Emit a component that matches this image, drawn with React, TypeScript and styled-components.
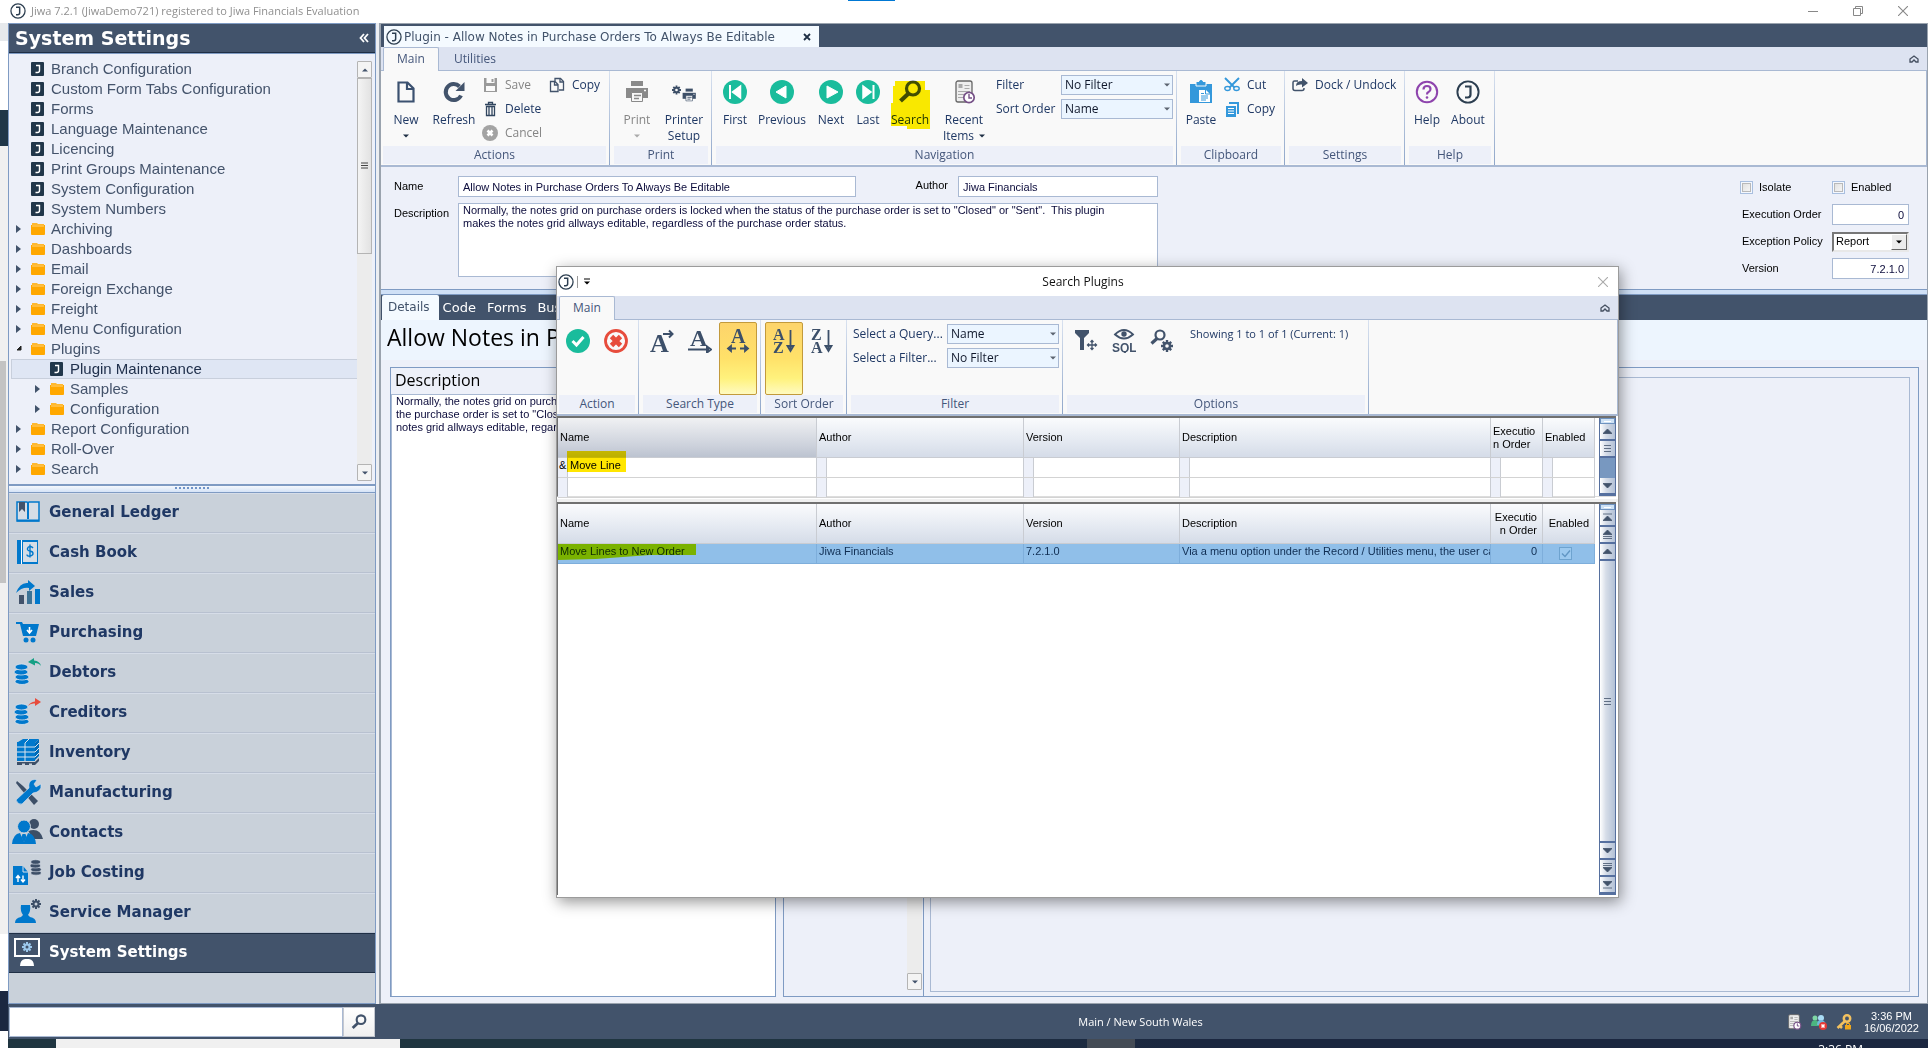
import React from 'react';
import styled, { createGlobalStyle, css } from 'styled-components';

const ui = '"Open Sans", "Noto Sans", sans-serif';
const classic = '"Liberation Sans", Arial, sans-serif';
const wide = '"DejaVu Sans", Verdana, sans-serif';

const slate = '#42536b';
const ink = '#1f3864';
const line = '#a9b9d3';
const edge = '#7f9bc3';
const pale = '#edf0f9';
const blue = '#0078cc';
const sky = '#3498db';
const teal = '#1abc9c';

const GlobalStyle = createGlobalStyle`
  *, *::before, *::after { box-sizing: border-box; }
  body { margin: 0; overflow: hidden; background: #fff; }
  button, input, select, textarea { font: inherit; color: inherit; margin: 0; border-radius: 0; }
  button { border: 0; padding: 0; background: none; cursor: pointer; }
  svg { display: block; flex: none; }
`;

/* ---------- icons ---------- */

type IconProps = { w?: number; h?: number; box?: string; children: React.ReactNode };
const Icon = ({ w = 24, h = w, box = `0 0 ${w} ${h}`, children }: IconProps) => (
  <svg width={w} height={h} viewBox={box} fill="none" aria-hidden="true">{children}</svg>
);

const Logo = ({ size = 16, color = '#2c3e50' }: { size?: number; color?: string }) => (
  <Icon w={size} box="0 0 24 24">
    <circle cx="12" cy="12" r="10.6" stroke={color} strokeWidth="1.9" />
    <path d="M9 6.5h5.5v8q0 3-3 3H9" stroke={color} strokeWidth="2.2" />
  </Icon>
);

const LeafIcon = () => (
  <Icon w={14}>
    <rect width="13" height="14" rx="1" fill="#20364a" />
    <path d="M5 3.5h3.500v5q0 2-2 2H4.500" stroke="#fff" strokeWidth="1.4" />
  </Icon>
);

const FolderIcon = () => (
  <Icon w={14}>
    <path d="M1 1h5l1 1h6v2H1z" fill="#ffb92e" />
    <path d="M0 3h14v9.500l-1 .5H1l-1-.5z" fill="#ffa800" />
    <path d="M1 4h12" stroke="#ffd27a" />
  </Icon>
);

const CaretRight = () => <Icon w={8}><path d="M1 0l5 4-5 4z" fill={slate} /></Icon>;
const CaretOpen = () => <Icon w={8}><path d="M6 1v4H2z" fill="#222" stroke="#222" /></Icon>;
const Down = ({ color = '#1f2f45' }: { color?: string }) => (
  <Icon w={6} h={4}><path d="M0 0.500h6l-3 3z" fill={color} /></Icon>
);
const Up = () => <Icon w={6} h={4}><path d="M0 3.500h6l-3-3z" fill={slate} /></Icon>;
const Cross = ({ color = '#888', size = 10 }: { color?: string; size?: number }) => (
  <Icon w={size} box="0 0 10 10"><path d="M0 0l10 10M10 0L0 10" stroke={color} strokeWidth="1.1" /></Icon>
);
const Collapse = () => (
  <Icon w={10} h={8}><path d="M1 7V4l4-3 4 3v3H7L5 5 3 7z" stroke="#444f60" strokeWidth="1.300" /></Icon>
);
const Grip = () => <Icon w={8} h={8}><path d="M0 1h7M0 3.500h7M0 6h7" stroke="#444" /></Icon>;

const NewDoc = () => (
  <Icon><path d="M4.500 2.500h9l6 6v13h-15zM13 2.500V9h6.500" stroke="#3b5170" strokeWidth="2.200" /></Icon>
);
const Refresh = () => (
  <Icon>
    <path d="M19 15.500a8 8 0 1 1-1.500-9" stroke={slate} strokeWidth="4" />
    <path d="M22.500 2v9h-9z" fill={slate} />
  </Icon>
);
const Save = () => (
  <Icon w={16}>
    <path d="M2 1h13v14H2z" fill="#9a9a9a" />
    <path d="M4.500 1h8v5h-8zM4 9h9v5H4z" fill="#fafafa" />
    <path d="M9.500 2h2v3h-2z" fill="#9a9a9a" />
  </Icon>
);
const Trash = () => (
  <Icon w={16}>
    <path d="M3 3.500h11M6.500 3V1.500h4V3M4.500 5.500v9h8v-9zM7 6v8M10 6v8" stroke="#31465f" strokeWidth="1.300" />
  </Icon>
);
const CancelIcon = () => (
  <Icon w={16}><circle cx="8" cy="8" r="8" fill="#a3a3a3" /><path d="M5.500 5.500l5 5m0-5l-5 5" stroke="#fff" strokeWidth="2.600" /></Icon>
);
const CopyDocs = () => (
  <Icon w={16}>
    <path d="M6 4V1.500h5.500l3 3V13H10" stroke={slate} strokeWidth="1.300" />
    <path d="M1.500 4.500h4.500l3 3v7H1.500zM5.500 4.500V8h3.500M11 1.500V5h3" stroke={slate} strokeWidth="1.300" />
  </Icon>
);
const PrinterShape = ({ color, ground = '#f9f9f9' }: { color: string; ground?: string }) => (
  <>
    <path d="M6 1h12v5H6z" fill={color} />
    <path d="M1 8h22v10H1z" fill={color} />
    <path d="M6.500 12.500h11v9h-11z" fill={ground} stroke={color} />
    <path d="M9 15.500h7M9 18.500h5" stroke={color} strokeWidth="1.500" />
    <path d="M19 10.500h2" stroke={ground} strokeWidth="1.500" />
  </>
);
const Printer = () => <Icon><PrinterShape color="#8a8a8a" /></Icon>;

const cogSpokes = 'M0-5V5M-5 0H5M-3.500-3.500L3.500 3.500M3.500-3.500L-3.500 3.500';
const Cog = ({ x, y, k = 1, color, hole }: { x: number; y: number; k?: number; color: string; hole: string }) => (
  <g transform={`translate(${x} ${y}) scale(${k})`}>
    <path d={cogSpokes} stroke={color} strokeWidth="2" />
    <circle r="3.500" fill={color} />
    <circle r="1.500" fill={hole} />
  </g>
);
const PrinterCog = () => (
  <Icon>
    <Cog x={4.5} y={10} k={0.9} color="#3d4f67" hole="#f9f9f9" />
    <g transform="translate(10 8) scale(.6)"><PrinterShape color="#3d4f67" /></g>
  </Icon>
);
const Disc = ({ children }: { children: React.ReactNode }) => (
  <Icon><circle cx="12" cy="12" r="12" fill={teal} />{children}</Icon>
);
const First = () => <Disc><path d="M17.500 6v12L9.500 12z" fill="#fff" stroke="#fff" strokeWidth="1.500" /><path d="M7 5v14" stroke="#fff" strokeWidth="2" /></Disc>;
const Previous = () => <Disc><path d="M16 6v12L6 12z" fill="#fff" stroke="#fff" /></Disc>;
const Next = () => <Disc><path d="M8 6v12l11-6z" fill="#fff" stroke="#fff" /></Disc>;
const Last = () => <Disc><path d="M7 6v12l8-6z" fill="#fff" stroke="#fff" strokeWidth="1.500" /><path d="M17.500 5v14" stroke="#fff" strokeWidth="2" /></Disc>;
const SearchIcon = ({ size = 24, color = slate }: { size?: number; color?: string }) => (
  <Icon w={size} box="0 0 24 24">
    <circle cx="15" cy="8.500" r="6.500" stroke={color} strokeWidth="3.200" />
    <path d="M10.500 13.500L2.500 21" stroke={color} strokeWidth="4.200" />
  </Icon>
);
const Recent = ({ size = 24 }: { size?: number }) => (
  <Icon w={size} box="0 0 24 24">
    <rect x="4" y="1" width="16" height="21" rx="2" fill="#eee" stroke="#666" strokeWidth="1.300" />
    <path d="M6.500 4h4v4h-4zM12.500 5h5v1h-5zM12.500 8h5v1h-5zM6 11h12v1H6zM6 14h7v1H6zM6 17h6v1H6z" fill="#aaa" />
    <circle cx="17" cy="17.500" r="5.200" fill="#fff" stroke="#765087" strokeWidth="1.700" />
    <path d="M17 14v4h3" stroke="#765087" strokeWidth="1.400" />
  </Icon>
);
const Paste = () => (
  <Icon>
    <path d="M1 4h22v19H1z" fill={sky} />
    <path d="M7 1.500h10V6H7z" fill={sky} stroke="#f9f9f9" />
    <circle cx="12" cy="2" r="1.500" fill={sky} stroke={sky} />
    <path d="M10 10h7l4 4v8H10z" fill="#fff" />
    <path d="M16.500 10v4H21M12 13.500h3M12 16h7M12 18h7M12 20h5" stroke={sky} />
  </Icon>
);
const Scissors = () => (
  <Icon w={16}>
    <path d="M1 1l9.500 9.500M15 1L5.500 10.500" stroke={sky} strokeWidth="1.900" />
    <ellipse cx="3.500" cy="11.500" rx="2.700" ry="2" stroke={sky} strokeWidth="1.400" />
    <ellipse cx="12.500" cy="11.500" rx="2.700" ry="2" stroke={sky} strokeWidth="1.400" />
  </Icon>
);
const CopyBlue = () => (
  <Icon w={16}>
    <path d="M5 1h10v12h-2V3H5z" fill={sky} />
    <path d="M2 5h10v11H2z" fill={sky} />
    <path d="M4 7.500h6M4 10h6M4 12.500h6" stroke="#fff" />
  </Icon>
);
const Dock = () => (
  <Icon w={16}>
    <path d="M6 4H2.500Q1 4 1 5.500v6Q1 13.500 3 13.500h7q2 0 2-2V11" stroke={slate} strokeWidth="1.500" />
    <path d="M4 9q0-5 6-5V1l6 5-6 4.500V7.500Q6 7 4 9z" fill={slate} />
  </Icon>
);
const Help = () => (
  <Icon>
    <circle cx="12" cy="12" r="10.200" stroke="#8e44ad" strokeWidth="2" />
    <path d="M8.500 9.500q0-3.500 3.500-3.500t3.500 3q0 2-2 3-1.500.7-1.500 2.500" stroke="#8e44ad" strokeWidth="2.200" />
    <circle cx="12" cy="17.500" r="1.300" fill="#8e44ad" />
  </Icon>
);
const Tick = () => <Disc><path d="M6.500 12l4 4 7-8" stroke="#fff" strokeWidth="3" /></Disc>;
const Stop = () => (
  <Icon>
    <circle cx="12" cy="12" r="10.500" stroke="#e74c3c" strokeWidth="2.800" />
    <path d="M7.500 7.500l9 9m0-9l-9 9" stroke="#e74c3c" strokeWidth="4.800" />
  </Icon>
);
const serifText = { fontFamily: '"Liberation Serif", serif', fontWeight: 700, fill: '#3c4f69' };
const StartsWith = () => (
  <Icon>
    <text x="0" y="23" fontSize="26" {...serifText}>A</text>
    <path d="M13 5h9M19 1.500L22.500 5 19 8.500" stroke="#3c4f69" strokeWidth="2" />
  </Icon>
);
const Underlined = () => (
  <Icon>
    <text x="2" y="17" fontSize="24" {...serifText}>A</text>
    <path d="M0 20.500h21M19 17.500l4 3-4 3z" stroke="#3c4f69" strokeWidth="2" />
  </Icon>
);
const Contains = () => (
  <Icon>
    <text x="5" y="14" fontSize="20" {...serifText}>A</text>
    <path d="M3 19.500h7M14 19.500h7M5 17l-3 2.500L5 22zM19 17l3 2.500-3 2.500z" stroke="#3c4f69" strokeWidth="1.800" />
  </Icon>
);
const Sort = ({ a, b }: { a: string; b: string }) => (
  <Icon>
    <text x="1" y="11" fontSize="16" {...serifText}>{a}</text>
    <text x="1" y="24" fontSize="16" {...serifText}>{b}</text>
    <path d="M18.500 1v19M15.500 17l3 5 3-5z" stroke="#3c4f69" strokeWidth="1.800" />
  </Icon>
);
const Funnel = () => (
  <Icon>
    <path d="M1 1h14v3l-5 5v12H6V9L1 4z" fill={slate} />
    <path d="M18 11.500v9M13.500 16h9M16.500 13l1.500-1.500 1.500 1.500M16.500 19l1.500 1.500 1.500-1.500M15 14.500L13.500 16l1.500 1.500M21 14.500l1.500 1.500-1.500 1.500" stroke={slate} strokeWidth="1.300" />
  </Icon>
);
const EyeSql = () => (
  <Icon>
    <path d="M3 5.500q9-9 18 0-9 8-18 0z" stroke={slate} strokeWidth="1.800" />
    <circle cx="12" cy="5" r="2.700" fill={slate} />
    <text x="0" y="22.500" fontSize="12" fontFamily={classic} fontWeight="700" fill={slate}>SQL</text>
  </Icon>
);
const SearchCog = () => (
  <Icon>
    <circle cx="10" cy="6" r="4.500" stroke={slate} strokeWidth="2.200" />
    <path d="M7 9.500l-5.500 5" stroke={slate} strokeWidth="3.200" />
    <Cog x={17} y={17} k={1.2} color={slate} hole="#f9f9f9" />
  </Icon>
);

const Coins = ({ x = 0, y = 0, k = 1, color = blue }: { x?: number; y?: number; k?: number; color?: string }) => (
  <g transform={`translate(${x} ${y}) scale(${k})`} fill={color} stroke="#dbe3ec" strokeWidth=".8">
    <ellipse cx="8" cy="18.500" rx="7" ry="3" />
    <ellipse cx="8" cy="14" rx="7" ry="3" />
    <ellipse cx="7" cy="9" rx="7" ry="3" />
    <ellipse cx="7.500" cy="4" rx="6.500" ry="3" />
  </g>
);
const NavIcon = ({ children }: { children: React.ReactNode }) => <Icon w={32} h={28}>{children}</Icon>;

const navIcons: Record<string, React.ReactNode> = {
  'General Ledger': (
    <NavIcon>
      <path d="M5 4h10l1 1 1-1h10v19H5z" stroke={blue} strokeWidth="1.500" fill="#d5dde6" />
      <path d="M16 5v16M5 22.500h22" stroke={blue} strokeWidth="2" />
      <path d="M7 4h6v10l-3-3-3 3z" fill={slate} />
    </NavIcon>
  ),
  'Cash Book': (
    <NavIcon>
      <path d="M5 2h21v24H5z" fill={blue} />
      <path d="M11 4h14v20H11z" fill="#d5dde6" />
      <path d="M9.500 2v24" stroke="#fff" />
      <path d="M21 10q-1-1.500-3-1.500T15.500 10.500t2.500 2.500 3 2.500-3 2.500-3-1.500M18 6.500v13" stroke={blue} strokeWidth="1.400" />
    </NavIcon>
  ),
  Sales: (
    <NavIcon>
      <path d="M7 17h5v9H7z" fill={slate} /><path d="M15 13h5v13h-5z" fill="#3d7396" /><path d="M23 11h5v15h-5z" fill={blue} />
      <path d="M4 15Q8 4 16 5V2l7 6-6 5v-3Q10 9 4 15z" fill={blue} />
    </NavIcon>
  ),
  Purchasing: (
    <NavIcon>
      <path d="M4 4h6l1 2h16l-3 12H11L8 6H4z" fill={blue} />
      <path d="M17.500 9v5M15 12l2.500 3 2.500-3" stroke="#fff" strokeWidth="1.600" />
      <circle cx="14" cy="22" r="2.500" fill={blue} /><circle cx="21" cy="22" r="2.500" fill={blue} />
    </NavIcon>
  ),
  Debtors: (
    <NavIcon>
      <Coins x={2} y={5} />
      <path d="M29 8q-2-3-6-3V7.500L16 4l6-4v2.500Q28 3 29 8z" fill="#16a085" />
    </NavIcon>
  ),
  Creditors: (
    <NavIcon>
      <Coins x={2} y={5} />
      <path d="M16 8q2-4 7-4.500V0l6 4-6 4V5.500Q18 5 16 8z" fill="#e74c3c" />
    </NavIcon>
  ),
  Inventory: (
    <NavIcon>
      <path d="M6 4l5-3h16l-4 4v18H5V4z" fill={blue} /><path d="M23 5l4-4v17l-4 4z" fill="#006bb8" />
      <path d="M5 9h18l4-4M5 14h18l4-4M5 19h18l4-4M13 5l4-4M13 5v18" stroke="#dbe3ec" />
      <path d="M5 24h18l4-4v3l-4 4h-3v-1.500h-3V27h-4v-1.500h-3V27H5z" fill="#3d4f67" />
    </NavIcon>
  ),
  Manufacturing: (
    <NavIcon>
      <path d="M5 3l6 5 15 15-4 4L8 10 4 5z" fill="#3d4f67" />
      <path d="M4 22L17 10q-1-6 3-8 3-1 5 0l-3 4 2 3 5-3q1 8-8 9L10 26q-4 1-6-4z" fill={blue} stroke="#dbe3ec" strokeWidth=".6" />
    </NavIcon>
  ),
  Contacts: (
    <NavIcon>
      <circle cx="22" cy="6" r="5" fill="#3d4f67" /><path d="M16 13q12-4 15 8h-9z" fill="#3d4f67" />
      <circle cx="12" cy="8.500" r="6.500" fill={blue} stroke="#c9d1da" />
      <path d="M0 26q1-10 8-11l4 9 4-9q7 1 8 11z" fill={blue} /><path d="M10.500 16h3l1 3-2.500 6-2.500-6z" fill={blue} />
    </NavIcon>
  ),
  'Job Costing': (
    <NavIcon>
      <Coins x={18} y={1} k={0.75} color="#3d4f67" />
      <path d="M1 8h10l5 6v13H1z" fill={blue} /><path d="M11 8v6h5" stroke="#dbe3ec" />
      <path d="M6 24v-6M4 20l2-2.500L8 20M11 17.500v6M9 21.500l2 2.500 2-2.500" stroke="#fff" strokeWidth="1.400" />
    </NavIcon>
  ),
  'Service Manager': (
    <NavIcon>
      <path d="M3 25q0-5 6-6l2-2q-3-4-2-10h9q1 6-2 10l2 2q6 1 6 6z" fill={blue} />
      <Cog x={24} y={6} color="#3d4f67" hole="#c9d1da" />
    </NavIcon>
  ),
  'System Settings': (
    <NavIcon>
      <path d="M3 1h24v17H3z" fill={slate} stroke="#fff" strokeWidth="2" />
      <Cog x={15} y={9} color="#9cc8ec" hole={slate} />
      <path d="M8 28q0-6 5-7h4q5 1 5 7z" fill="#fff" />
    </NavIcon>
  ),
};

/* ---------- shell ---------- */

const Desktop = styled.div`
  display: grid;
  grid-template: 23px minmax(0, 1fr) 9px / 8px minmax(0, 1fr);
  height: 100vh;
  font: 12px/16px ${ui};
  color: ${ink};
`;
const TitleBar = styled.header`
  grid-column: 1 / -1;
  display: flex;
  align-items: center;
  padding: 0 20px 2px 10px;
  gap: 5px;
  font-size: 11px;
  color: #8f8f8f;
  background: linear-gradient(#0078d4, #0078d4) 848px 0 / 47px 1px no-repeat #fff;
`;
const TitleText = styled.span`flex: 1;`;
const WindowButtons = styled.div`
  display: flex;
  gap: 35px;
  align-items: center;
`;
const Backdrop = styled.div`
  display: flex;
  flex-direction: column;
  background: #f0f0f0;
  overflow: hidden;
`;
const Strip = styled.div<{ $h?: number; $w?: number; $c: string }>`
  height: ${p => (p.$h ? `${p.$h}px` : 'auto')};
  flex: ${p => (p.$h ? 'none' : 1)};
  width: ${p => p.$w ?? 8}px;
  background: ${p => p.$c};
`;
const Taskbar = styled.footer`
  grid-column: 1 / -1;
  display: flex;
  justify-content: flex-end;
  padding: 3px 65px 0 0;
  color: #fff;
  overflow: hidden;
  background:
    linear-gradient(#444b55, #444b55) 1087px 0 / 48px 9px no-repeat,
    linear-gradient(90deg, #fff 8px, #1f3540 8px 56px, #f0f0f0 56px 400px, #1f3540 400px 700px, #1b2740 1200px, #1b2740);
`;
const Shell = styled.div`
  display: grid;
  grid-template: minmax(0, 1fr) 35px / 368px minmax(0, 1fr);
  column-gap: 3px;
  background: ${slate};
  min-height: 0;
`;
const Sidebar = styled.aside`
  display: flex;
  flex-direction: column;
  border: 1px solid ${edge};
  background: ${pale};
  min-height: 0;
  box-shadow: 3px 0 0 #eceef2;
`;
const SideHeader = styled.div`
  display: flex;
  align-items: center;
  justify-content: space-between;
  height: 29px;
  flex: none;
  padding: 0 6px 0 6px;
  background: ${slate};
  border-bottom: 1px solid #1f2f45;
  color: #fff;
  font: bold 19px/24px ${wide};
`;
const TreeArea = styled.div`
  flex: 1;
  display: flex;
  min-height: 0;
  border-top: 1px solid ${edge};
  border-bottom: 2px solid ${edge};
`;
const Tree = styled.ul`
  flex: 1;
  list-style: none;
  margin: 0;
  padding: 5px 0 0 2px;
  overflow: hidden;
  font: 15px/18px ${classic};
  color: #44536b;
`;
const TreeRow = styled.li<{ $level: number; $on?: boolean }>`
  display: flex;
  align-items: center;
  height: 18px;
  margin: 1px 0 2px;
  padding-left: ${p => 4 + p.$level * 19}px;
  ${p => p.$on && css`
    background: #dfe6f4;
    color: #20304c;
    box-shadow: inset 1px 0 0 #c8cfdc, 0 -1px 0 #c8cfdc, 0 1px 0 #c8cfdc;
  `}
`;
const TreeCaret = styled.span`width: 16px;`;
const TreeIcon = styled.span`width: 20px;`;
const ScrollTrack = styled.div`
  display: flex;
  flex-direction: column;
  width: 15px;
  margin: 7px 3px 3px 0;
  background: #ececec;
`;
const ScrollButton = styled.button`
  display: grid;
  place-items: center;
  height: 17px;
  border: 1px solid #b4b4b4;
  border-radius: 1px;
  background: #f4f4f4;
`;
const ScrollThumb = styled.div`
  display: grid;
  place-items: center;
  height: 176px;
  border: 1px solid #b4b4b4;
  background: linear-gradient(90deg, #f4f4f4, #e2e2e2);
`;
const ScrollSpace = styled.div`flex: 1;`;
const Splitter = styled.div`
  height: 6px;
  flex: none;
  display: grid;
  justify-items: center;
  padding-top: 1px;
  background: linear-gradient(#f5f8fd, #d5e3f7);
`;
const SplitDots = styled.span`
  width: 35px;
  height: 2px;
  background: repeating-linear-gradient(90deg, #6f93c8 0 2px, transparent 2px 4px);
`;
const ModuleNav = styled.nav`
  flex: none;
  padding-bottom: 30px;
  border-top: 1px solid ${edge};
  background: #c9d1da;
`;
const ModuleButton = styled.button<{ $on?: boolean }>`
  display: flex;
  align-items: center;
  gap: 5px;
  width: 100%;
  height: 40px;
  padding: 0 0 2px 3px;
  text-align: left;
  font: bold 15px/20px ${wide};
  color: ${p => (p.$on ? '#fff' : ink)};
  background: ${p => (p.$on ? slate : '#c9d1da')};
  border-bottom: 1px solid ${p => (p.$on ? '#1f2f45' : '#b8c1d0')};
  border-top: 1px solid ${p => (p.$on ? '#1f2f45' : '#d6dde8')};
`;

const QuickSearch = styled.form`
  display: flex;
  padding: 3px 1px 2px;
`;
const QuickInput = styled.input`
  flex: 1;
  min-width: 0;
  border: 1px solid ${line};
  background: #fff;
`;
const QuickButton = styled.button`
  display: grid;
  place-items: center;
  width: 32px;
  border: 1px solid #c4c8d0;
  background: linear-gradient(#fff, #f0f0f0);
`;
const StatusBar = styled.div`
  display: grid;
  align-items: center;
  color: #fff;
  font: 11px/12px ${classic};
`;
const StatusText = styled.span`
  grid-area: 1 / 1;
  justify-self: center;
  padding-right: 26px;
  font: 11px/16px ${ui};
`;
const Tray = styled.div`
  grid-area: 1 / 1;
  justify-self: end;
  display: flex;
  align-items: center;
  gap: 9px;
  padding-right: 9px;
`;
const Clock = styled.time`
  padding-left: 3px;
  text-align: center;
  font: 11px/12px ${classic};
`;

/* ---------- document ---------- */

const Document = styled.main`
  display: flex;
  flex-direction: column;
  min-height: 0;
  border: 1px solid #9aa3ae;
  border-width: 1px 1px 1px 2px;
  background: ${pale};
`;
const DocTabs = styled.div`
  display: flex;
  height: 23px;
  flex: none;
  padding: 2px 0 0 3px;
  background: ${slate};
`;
const DocTab = styled.div`
  display: flex;
  align-items: center;
  gap: 2px;
  padding: 0 8px 0 2px;
  background: #f4faff;
  color: ${slate};
  font: 12px/20px ${wide};
`;
const TabClose = styled.button`margin-left: 26px;`;

const RibbonTabs = styled.div`
  display: flex;
  height: 23px;
  flex: none;
  padding: 0 8px 0 2px;
  background: #dde3f1;
  color: #44567a;
`;
const RibbonTab = styled.button<{ $on?: boolean }>`
  width: ${p => (p.$on ? 56 : 72)}px;
  height: 24px;
  padding-bottom: 1px;
  ${p => p.$on && css`
    background: #f9f9f9;
    border: 1px solid ${line};
    border-bottom: 0;
    border-radius: 2px 2px 0 0;
    position: relative;
  `}
`;
const CollapseButton = styled.button`
  margin-left: auto;
`;
const RibbonBar = styled.div`
  display: flex;
  flex: none;
  height: 97px;
  border: 1px solid ${line};
  border-width: 1px 1px 2px 0;
  background: #f9f9f9;
`;
const Group = styled.section<{ $w: number; $first?: boolean }>`
  display: flex;
  flex-direction: column;
  width: ${p => p.$w}px;
  flex: none;
  padding: 0 3px 1px ${p => (p.$first ? 2 : 4)}px;
  border-right: 1px solid;
  border-image: linear-gradient(#d9e2f0, #8fa6c9) 1;
`;
const GroupBody = styled.div`
  display: flex;
  height: 75px;
`;
const GroupTitle = styled.div`
  height: 18px;
  text-align: center;
  line-height: 18px;
  background: ${pale};
  color: #44567a;
`;
const BigButton = styled.button<{ $w: number; $on?: boolean; $off?: boolean }>`
  display: flex;
  flex-direction: column;
  align-items: center;
  width: ${p => p.$w}px;
  padding-top: 9px;
  gap: 8px;
  flex: none;
  color: ${p => (p.$off ? '#858585' : ink)};
  ${p => p.$on && css`
    height: 73px;
    margin-top: 2px;
    padding-top: 6px;
    border: 1px solid #c29a3c;
    border-radius: 2px;
    background: linear-gradient(#fdd46b, #ffe169 50%, #fff27d 78%, #fffac0);
  `}
`;
const BigLabel = styled.span`
  display: flex;
  flex-direction: column;
  align-items: center;
  line-height: 16px;
  white-space: nowrap;
`;
const CaretLine = styled.span`
  display: flex;
  align-items: center;
  justify-content: center;
  gap: 5px;
  min-height: 15px;
`;
const SmallColumn = styled.div<{ $w?: number }>`
  display: flex;
  flex-direction: column;
  padding-top: 2px;
  width: ${p => (p.$w ? `${p.$w}px` : 'auto')};
`;
const SmallButton = styled.button<{ $off?: boolean }>`
  display: flex;
  align-items: center;
  gap: 7px;
  height: 24px;
  padding-left: 3px;
  white-space: nowrap;
  color: ${p => (p.$off ? '#858585' : ink)};
`;
const PickGrid = styled.div<{ $label: number }>`
  display: grid;
  grid-template-columns: ${p => p.$label}px 112px;
  grid-auto-rows: 20px;
  gap: 4px 0;
  align-items: center;
  align-content: start;
  padding-top: 4px;
  white-space: nowrap;
`;
const PickGridNav = styled(PickGrid)`margin-left: 4px;`;
const PickGridDialog = styled(PickGrid)`padding-left: 2px;`;
const PickBox = styled.span`
  display: grid;
  align-items: center;
  & > * { grid-area: 1 / 1; }
  & > svg { justify-self: end; margin-right: 3px; pointer-events: none; }
`;
const Pick = styled.select`
  appearance: none;
  width: 100%;
  height: 20px;
  padding: 0 3px;
  border: 1px solid ${line};
  background: #ebf5ff;
  color: #10182c;
  line-height: 16px;
`;
const MarkerHost = styled.span`
  position: relative;
  display: flex;
`;
const Marker = styled.svg<{ $x: number; $y: number }>`
  position: absolute;
  left: ${p => p.$x}px;
  top: ${p => p.$y}px;
  mix-blend-mode: multiply;
  pointer-events: none;
`;

const FormArea = styled.div`
  display: flex;
  justify-content: space-between;
  flex: none;
  height: 122px;
  padding: 9px 18px 0 13px;
  font: 11px/13px ${classic};
  color: #000;
`;
const FieldGrid = styled.div`
  display: grid;
  grid-template: 21px 74px / 64px 398px 102px 200px;
  row-gap: 6px;
`;
const FieldLabel = styled.label<{ $end?: boolean }>`
  padding: ${p => (p.$end ? '3px 10px 0 0' : '4px 0 0')};
  text-align: ${p => (p.$end ? 'right' : 'left')};
`;
const Field = styled.input<{ $end?: boolean }>`
  min-width: 0;
  width: 100%;
  height: 21px;
  padding: 0 4px;
  border: 1px solid ${line};
  background: #fff;
  color: #0b0b3b;
  text-align: ${p => (p.$end ? 'right' : 'left')};
`;
const Memo = styled.textarea`
  display: block;
  resize: none;
  outline: 0;
  padding: 0 24px 0 4px;
  border: 1px solid ${line};
  background: #fff;
  color: #0b0b3b;
  overflow: hidden;
`;
const FormMemo = styled(Memo)`grid-column: 2 / -1;`;
const OptionGrid = styled.div`
  display: grid;
  grid-template-columns: 92px 77px;
  grid-auto-rows: 21px;
  row-gap: 6px;
  padding-top: 1px;
  align-items: center;
`;
const CheckLabel = styled.label`
  display: flex;
  align-items: center;
  gap: 6px;
`;
const Check = styled.input`
  appearance: none;
  width: 13px;
  height: 13px;
  border: 1px solid #a9bfdf;
  background: linear-gradient(135deg, #dcdcdc, #fbfbfb);
  box-shadow: inset 0 0 0 1px #f4f8ff, inset 0 0 0 2px #b9b9b9;
`;
const OptionLabel = styled.label`padding-left: 2px; white-space: nowrap;`;
const PolicySelect = styled.select`
  appearance: none;
  width: 100%;
  height: 20px;
  padding: 0 2px;
  border: 2px solid;
  border-color: #777 #e8e8e8 #e8e8e8 #777;
  background: #fff;
`;
const PolicyArrow = styled.span`
  justify-self: end;
  display: grid;
  place-items: center;
  width: 16px;
  height: 16px;
  margin-right: 2px;
  background: #ececec;
  border: 1px solid;
  border-color: #fff #666 #666 #fff;
  pointer-events: none;
`;
const Divider = styled.div`
  height: 6px;
  flex: none;
  border: 1px solid ${edge};
  border-width: 1px 0;
  background: #cfe0f6;
`;
const PageTabs = styled.div`
  display: flex;
  height: 25px;
  flex: none;
  padding-left: 1px;
  background: ${slate};
  color: #fff;
  font: 13px/24px ${wide};
`;
const PageTab = styled.button<{ $on?: boolean }>`
  padding: ${p => (p.$on ? '0 9px 4px 6px' : '0 7px 0 4px')};
  ${p => p.$on && css`
    background: #f4faff;
    color: ${slate};
    font-size: 12px;
    border-radius: 2px 2px 0 0;
  `}
`;
const Heading = styled.h1`
  margin: 0;
  flex: none;
  height: 40px;
  padding: 0 6px;
  background: #edf5fe;
  color: #000;
  font: 23px/34px ${ui};
`;
const Panels = styled.div`
  flex: 1;
  display: grid;
  grid-template-columns: 386px minmax(0, 1fr);
  column-gap: 7px;
  min-height: 0;
  padding: 7px 8px 6px 9px;
`;
const Panel = styled.section`
  display: flex;
  flex-direction: column;
  border: 1px solid ${edge};
  min-height: 0;
`;
const PanelTitle = styled.h2`
  margin: 0;
  height: 27px;
  flex: none;
  padding-left: 4px;
  font: 16px/24px ${ui};
  color: #000;
  border-bottom: 1px solid ${line};
`;
const PanelMemo = styled(Memo)`
  flex: 1;
  border-width: 0 0 0 1px;
  padding-right: 18px;
  font: 11px/13px ${classic};
`;
const SplitPanel = styled.section`
  display: grid;
  grid-template-columns: 140px minmax(0, 1fr);
  column-gap: 6px;
  padding-right: 8px;
  border: 1px solid ${edge};
  min-height: 0;
`;
const Picker = styled.div`
  display: flex;
  justify-content: flex-end;
  border-right: 1px solid ${edge};
`;
const PickerTrack = styled(ScrollTrack)`margin: 7px 1px 6px 0;`;
const InnerFrame = styled.div`
  margin: 9px 0 4px;
  border: 1px solid ${line};
`;

/* ---------- search window ---------- */

const Dialog = styled.div`
  position: absolute;
  left: 556px;
  top: 266px;
  width: 1063px;
  height: 632px;
  display: flex;
  flex-direction: column;
  border: 1px solid #9b9b9b;
  background: #fff;
  color: ${ink};
  font: 12px/16px ${ui};
  box-shadow: 2px 4px 14px rgba(0, 0, 0, .42);
`;
const DialogTitle = styled.div`
  display: grid;
  grid-template-columns: 40px 1fr 40px;
  align-items: center;
  height: 29px;
  flex: none;
  padding: 0 10px 0 1px;
  color: #111;
  text-align: center;
`;
const QuickAccess = styled.span`
  display: flex;
  align-items: center;
  gap: 3px;
`;
const Bar = styled.span`
  width: 1px;
  height: 12px;
  margin-right: 3px;
  background: #999;
`;
const DialogClose = styled.button`justify-self: end;`;
const Showing = styled.output`
  padding: 6px 0 0 9px;
  font-size: 11px;
  white-space: nowrap;
`;
const GridFrame = styled.div<{ $fill?: boolean }>`
  display: flex;
  justify-content: space-between;
  align-items: stretch;
  ${p => (p.$fill ? 'flex: 1; min-height: 0;' : 'height: 81px; flex: none; border-bottom: 1px solid #ddd;')}
  margin: 0 2px 2px 0;
  border-top: 2px solid #707070;
  border-left: 1px solid #707070;
  font: 11px/13px ${classic};
  color: #000;
`;
const GridGap = styled.div`
  height: 3px;
  flex: none;
  background: #f0f0f0;
`;
const Table = styled.table`
  width: 1037px;
  height: max-content;
  table-layout: fixed;
  border-collapse: separate;
  border-spacing: 0;
`;
const HeadCell = styled.th<{ $on?: boolean; $end?: boolean }>`
  height: 40px;
  padding: 0 5px 0 2px;
  border-right: 1px solid #c9ccd2;
  border-bottom: 1px solid #c9ccd2;
  font-weight: 400;
  text-align: ${p => (p.$end ? 'right' : 'left')};
  word-break: break-all;
  background: ${p => (p.$on
    ? 'linear-gradient(#f0f1f3, #cdd2dc 70%, #bcc3d0)'
    : 'linear-gradient(#fafbfd, #e4e9f1 60%, #d5dce8)')};
`;
const FilterCell = styled.td`
  height: 20px;
  padding: 0;
  border-right: 1px solid #c9ccd2;
  border-bottom: 1px solid #d3d3d3;
`;
const FilterBox = styled.span`
  display: flex;
  height: 19px;
  line-height: 14px;
  position: relative;
`;
const Operator = styled.span`
  width: 10px;
  padding-left: 1px;
  border-right: 1px solid #c9ccd2;
  background: ${pale};
`;
const FilterInput = styled.input`
  flex: 1;
  min-width: 0;
  border: 0;
  padding: 0 2px 5px;
  background: none;
`;
const ResultCell = styled.td<{ $end?: boolean }>`
  height: 20px;
  padding: 0 ${p => (p.$end ? 5 : 0)}px 5px 2px;
  border-right: 1px solid #7eaedb;
  border-bottom: 1px solid #7eaedb;
  background: #90bfe9;
  color: #0f2d52;
  overflow: hidden;
  white-space: nowrap;
  text-align: ${p => (p.$end ? 'right' : 'left')};
`;
const CheckCell = styled(ResultCell)`padding: 0 0 0 16px;`;
const CheckStack = styled.span`
  display: grid;
  justify-items: start;
  & > * { grid-area: 1 / 1; }
  & > svg { pointer-events: none; }
`;
const RowCheck = styled.input`
  appearance: none;
  width: 13px;
  height: 13px;
  border: 1px solid #6ea3cf;
  background: #9cc9ef;
`;
const Marked = styled.span`
  position: relative;
`;
const Bars = styled.div`
  display: flex;
  flex-direction: column;
  width: 17px;
  background: #7898c0;
  border: 1px solid #56709f;
  border-top: 0;
`;
const BarHandle = styled.div`
  height: 6px;
  flex: none;
  border: 1px solid #6f93bf;
  background: linear-gradient(#fff, #fff) center / 7px 1px no-repeat #cfe2f5;
`;
const BarButton = styled.button<{ $grow?: boolean }>`
  display: grid;
  place-items: center;
  height: 17px;
  flex: ${p => (p.$grow ? '1 1 auto' : 'none')};
  border-bottom: 2px solid #56709f;
  background: linear-gradient(90deg, #fff, #d6dde8 40%, #b3c1d6);
`;
const Arrow = ({ d }: { d: string }) => (
  <Icon w={9} h={9}><path d={d} fill={slate} stroke={slate} strokeWidth=".8" /></Icon>
);
const arrows = {
  up: 'M0 6.500h9L4.500 2z',
  down: 'M0 2.500h9L4.500 7z',
  top: 'M0 1h9M0 7.500h9L4.500 3z',
  pageUp: 'M0 4.500h9L4.500 0zM0 6.500h9M0 8.500h9',
  pageDown: 'M0 .5h9M0 2.500h9M0 4.500h9L4.500 9z',
  bottom: 'M0 1.500h9L4.500 6zM0 8h9',
  grip: 'M1 1.500h7M1 4.500h7M1 7.500h7',
};

/* ---------- data ---------- */

type Node = { label: string; level?: number; kind: 'leaf' | 'folder' | 'open'; on?: boolean };
const tree: Node[] = [
  ...['Branch Configuration', 'Custom Form Tabs Configuration', 'Forms', 'Language Maintenance', 'Licencing',
    'Print Groups Maintenance', 'System Configuration', 'System Numbers'].map(label => ({ label, kind: 'leaf' as const })),
  ...['Archiving', 'Dashboards', 'Email', 'Foreign Exchange', 'Freight', 'Menu Configuration'].map(label => ({ label, kind: 'folder' as const })),
  { label: 'Plugins', kind: 'open' },
  { label: 'Plugin Maintenance', kind: 'leaf', level: 1, on: true },
  { label: 'Samples', kind: 'folder', level: 1 },
  { label: 'Configuration', kind: 'folder', level: 1 },
  { label: 'Report Configuration', kind: 'folder' },
  { label: 'Roll-Over', kind: 'folder' },
  { label: 'Search', kind: 'folder' },
];

const columns = [
  { label: 'Name', width: 259 },
  { label: 'Author', width: 207 },
  { label: 'Version', width: 156 },
  { label: 'Description', width: 311 },
  { label: 'Execution Order', width: 52 },
  { label: 'Enabled', width: 52 },
];

const note = 'Normally, the notes grid on purchase orders is locked when the status of the purchase order is set to "Closed" or "Sent".  This plugin makes the notes grid allways editable, regardless of the purchase order status.';

const Columns = () => <colgroup>{columns.map(c => <col key={c.label} style={{ width: c.width }} />)}</colgroup>;

const PickField = ({ id, value }: { id: string; value: string }) => (
  <PickBox>
    <Pick id={id} defaultValue={value}><option>{value}</option></Pick>
    <Down color="#5c6470" />
  </PickBox>
);

type BigProps = { icon: React.ReactNode; w: number; label?: string; second?: string; caret?: boolean; off?: boolean };
const Big = ({ icon, w, label, second, caret, off }: BigProps) => (
  <BigButton $w={w} $off={off} disabled={off}>
    {icon}
    <BigLabel>
      {label}
      {(second || caret) && <CaretLine>{second}{caret && <Down color={off ? '#aaa' : undefined} />}</CaretLine>}
    </BigLabel>
  </BigButton>
);

const MainRibbon = () => (
  <RibbonBar>
    <Group $w={229} $first>
      <GroupBody>
        <Big icon={<NewDoc />} w={46} label="New" caret />
        <Big icon={<Refresh />} w={50} label="Refresh" />
        <SmallColumn $w={67}>
          <SmallButton $off><Save />Save</SmallButton>
          <SmallButton><Trash />Delete</SmallButton>
          <SmallButton $off><CancelIcon />Cancel</SmallButton>
        </SmallColumn>
        <SmallColumn><SmallButton><CopyDocs />Copy</SmallButton></SmallColumn>
      </GroupBody>
      <GroupTitle>Actions</GroupTitle>
    </Group>
    <Group $w={102}>
      <GroupBody>
        <Big icon={<Printer />} w={46} label="Print" caret off />
        <Big icon={<PrinterCog />} w={48} label="Printer" second="Setup" />
      </GroupBody>
      <GroupTitle>Print</GroupTitle>
    </Group>
    <Group $w={465}>
      <GroupBody>
        <Big icon={<First />} w={38} label="First" />
        <Big icon={<Previous />} w={56} label="Previous" />
        <Big icon={<Next />} w={42} label="Next" />
        <Big icon={<Last />} w={32} label="Last" />
        <MarkerHost>
          <Big icon={<SearchIcon />} w={52} label="Search" />
          <Marker $x={7} $y={10} width="39" height="48"><path d="M4 0h30v9h5v39H16v-3H0V22h2V5h2z" fill="#ffee00" /></Marker>
        </MarkerHost>
        <Big icon={<Recent />} w={56} label="Recent" second="Items" caret />
        <PickGridNav $label={65}>
          <label htmlFor="nav-filter">Filter</label>
          <PickField id="nav-filter" value="No Filter" />
          <label htmlFor="nav-sort">Sort Order</label>
          <PickField id="nav-sort" value="Name" />
        </PickGridNav>
      </GroupBody>
      <GroupTitle>Navigation</GroupTitle>
    </Group>
    <Group $w={108}>
      <GroupBody>
        <Big icon={<Paste />} w={40} label="Paste" />
        <SmallColumn>
          <SmallButton><Scissors />Cut</SmallButton>
          <SmallButton><CopyBlue />Copy</SmallButton>
        </SmallColumn>
      </GroupBody>
      <GroupTitle>Clipboard</GroupTitle>
    </Group>
    <Group $w={120}>
      <GroupBody>
        <SmallColumn><SmallButton><Dock />Dock / Undock</SmallButton></SmallColumn>
      </GroupBody>
      <GroupTitle>Settings</GroupTitle>
    </Group>
    <Group $w={90}>
      <GroupBody>
        <Big icon={<Help />} w={36} label="Help" />
        <Big icon={<Logo size={24} />} w={46} label="About" />
      </GroupBody>
      <GroupTitle>Help</GroupTitle>
    </Group>
  </RibbonBar>
);

const SearchDialog = () => (
  <Dialog role="dialog" aria-labelledby="search-title">
    <DialogTitle>
      <QuickAccess>
        <Logo />
        <Bar />
        <Icon w={6} h={8}><path d="M0 1h6" stroke="#000" /><path d="M0 3.500h6l-3 3z" fill="#000" /></Icon>
      </QuickAccess>
      <span id="search-title">Search Plugins</span>
      <DialogClose aria-label="Close"><Cross color="#aaa" /></DialogClose>
    </DialogTitle>
    <RibbonTabs>
      <RibbonTab $on>Main</RibbonTab>
      <CollapseButton aria-label="Collapse ribbon"><Collapse /></CollapseButton>
    </RibbonTabs>
    <RibbonBar>
      <Group $w={82} $first>
        <GroupBody>
          <BigButton $w={38} aria-label="Accept"><Tick /></BigButton>
          <BigButton $w={38} aria-label="Cancel"><Stop /></BigButton>
        </GroupBody>
        <GroupTitle>Action</GroupTitle>
      </Group>
      <Group $w={122}>
        <GroupBody>
          <BigButton $w={38}><StartsWith /></BigButton>
          <BigButton $w={38}><Underlined /></BigButton>
          <BigButton $w={38} $on><Contains /></BigButton>
        </GroupBody>
        <GroupTitle>Search Type</GroupTitle>
      </Group>
      <Group $w={86}>
        <GroupBody>
          <BigButton $w={38} $on><Sort a="A" b="Z" /></BigButton>
          <BigButton $w={38}><Sort a="Z" b="A" /></BigButton>
        </GroupBody>
        <GroupTitle>Sort Order</GroupTitle>
      </Group>
      <Group $w={216}>
        <GroupBody>
          <PickGridDialog $label={94}>
            <label htmlFor="query">Select a Query...</label>
            <PickField id="query" value="Name" />
            <label htmlFor="filter">Select a Filter...</label>
            <PickField id="filter" value="No Filter" />
          </PickGridDialog>
        </GroupBody>
        <GroupTitle>Filter</GroupTitle>
      </Group>
      <Group $w={306}>
        <GroupBody>
          <BigButton $w={38} aria-label="Filter"><Funnel /></BigButton>
          <BigButton $w={38}><EyeSql /></BigButton>
          <BigButton $w={38} aria-label="Search options"><SearchCog /></BigButton>
          <Showing>Showing 1 to 1 of 1 (Current: 1)</Showing>
        </GroupBody>
        <GroupTitle>Options</GroupTitle>
      </Group>
    </RibbonBar>
    <GridFrame>
      <Table>
        <Columns />
        <thead><tr>{columns.map((c, i) => <HeadCell key={c.label} $on={i === 0}>{c.label}</HeadCell>)}</tr></thead>
        <tbody>
          {[0, 1].map(row => (
            <tr key={row}>
              {columns.map((c, i) => {
                const active = row === 0 && i === 0;
                return (
                  <FilterCell key={c.label}>
                    <FilterBox>
                      <Operator>{active ? '&' : ''}</Operator>
                      <FilterInput aria-label={`${c.label} filter ${row + 1}`} defaultValue={active ? 'Move Line' : ''} />
                      {active && <Marker $x={9} $y={-7} width="59" height="21"><path d="M0 0h59v21H0z" fill="#ffe600" /></Marker>}
                    </FilterBox>
                  </FilterCell>
                );
              })}
            </tr>
          ))}
        </tbody>
      </Table>
      <Bars>
        <BarHandle />
        <BarButton aria-label="Up"><Arrow d={arrows.up} /></BarButton>
        <BarButton aria-label="Thumb"><Arrow d={arrows.grip} /></BarButton>
        <ScrollSpace />
        <BarButton aria-label="Down"><Arrow d={arrows.down} /></BarButton>
      </Bars>
    </GridFrame>
    <GridGap />
    <GridFrame $fill>
      <Table>
        <Columns />
        <thead><tr>{columns.map((c, i) => <HeadCell key={c.label} $end={i > 3}>{c.label}</HeadCell>)}</tr></thead>
        <tbody>
          <tr>
            <ResultCell>
              <Marked>
                Move Lines to New Order
                <Marker $x={-2} $y={-11} width="138" height="26"><path d="M0 5L76 0h62v21H92L38 25 0 26z" fill="#d8ee00" /></Marker>
              </Marked>
            </ResultCell>
            <ResultCell>Jiwa Financials</ResultCell>
            <ResultCell>7.2.1.0</ResultCell>
            <ResultCell>Via a menu option under the Record / Utilities menu, the user can</ResultCell>
            <ResultCell $end>0</ResultCell>
            <CheckCell>
              <CheckStack>
                <RowCheck type="checkbox" defaultChecked aria-label="Enabled" />
                <Icon w={13}><path d="M3 6.500l3 3 5-6" stroke="#6196c4" strokeWidth="1.400" /></Icon>
              </CheckStack>
            </CheckCell>
          </tr>
        </tbody>
      </Table>
      <Bars>
        <BarHandle />
        <BarButton aria-label="First"><Arrow d={arrows.top} /></BarButton>
        <BarButton aria-label="Page up"><Arrow d={arrows.pageUp} /></BarButton>
        <BarButton aria-label="Up"><Arrow d={arrows.up} /></BarButton>
        <BarButton $grow aria-label="Thumb"><Arrow d={arrows.grip} /></BarButton>
        <BarButton aria-label="Down"><Arrow d={arrows.down} /></BarButton>
        <BarButton aria-label="Page down"><Arrow d={arrows.pageDown} /></BarButton>
        <BarButton aria-label="Last"><Arrow d={arrows.bottom} /></BarButton>
      </Bars>
    </GridFrame>
  </Dialog>
);

export default function App() {
  return (
    <>
      <GlobalStyle />
      <Desktop>
        <TitleBar>
          <Logo />
          <TitleText>Jiwa 7.2.1 (JiwaDemo721) registered to Jiwa Financials Evaluation</TitleText>
          <WindowButtons>
            <button aria-label="Minimise"><Icon w={10}><path d="M0 5.500h10" stroke="#888" /></Icon></button>
            <button aria-label="Restore"><Icon w={10}><path d="M.5 2.500h7v7h-7zM2.500 2.500v-2h7v7h-2" stroke="#888" /></Icon></button>
            <button aria-label="Close"><Cross /></button>
          </WindowButtons>
        </TitleBar>
        <Backdrop>
          <Strip $h={18} $c="#e6e9ec" />
          <Strip $h={69} $c="#fff" />
          <Strip $h={36} $c="#1f3648" />
          <Strip $h={215} $c="#f0f0f0" />
          <Strip $h={222} $w={6} $c="#c3c3c3" />
          <Strip $c="#f0f0f0" />
          <Strip $h={57} $c="#fff" />
          <Strip $h={40} $c="#1b2740" />
          <Strip $h={8} $c="#fff" />
        </Backdrop>
        <Shell>
          <Sidebar>
            <SideHeader>
              System Settings
              <button aria-label="Collapse panel">
                <Icon w={10} h={10}><path d="M5 1L1.500 5 5 9M9 1L5.500 5 9 9" stroke="#fff" strokeWidth="1.800" /></Icon>
              </button>
            </SideHeader>
            <TreeArea>
              <Tree>
                {tree.map(n => (
                  <TreeRow key={n.label} $level={n.level ?? 0} $on={n.on}>
                    <TreeCaret>{n.kind === 'folder' ? <CaretRight /> : n.kind === 'open' ? <CaretOpen /> : null}</TreeCaret>
                    <TreeIcon>{n.kind === 'leaf' ? <LeafIcon /> : <FolderIcon />}</TreeIcon>
                    {n.label}
                  </TreeRow>
                ))}
              </Tree>
              <ScrollTrack>
                <ScrollButton aria-label="Scroll up"><Up /></ScrollButton>
                <ScrollThumb><Grip /></ScrollThumb>
                <ScrollSpace />
                <ScrollButton aria-label="Scroll down"><Down color={slate} /></ScrollButton>
              </ScrollTrack>
            </TreeArea>
            <Splitter><SplitDots /></Splitter>
            <ModuleNav>
              {Object.entries(navIcons).map(([name, icon]) => (
                <ModuleButton key={name} $on={name === 'System Settings'}>{icon}{name}</ModuleButton>
              ))}
            </ModuleNav>
          </Sidebar>
          <Document>
            <DocTabs>
              <DocTab>
                <Logo />
                Plugin - Allow Notes in Purchase Orders To Always Be Editable
                <TabClose aria-label="Close tab"><Icon w={8}><path d="M1 1l6 6M7 1L1 7" stroke="#1f2f45" strokeWidth="1.800" /></Icon></TabClose>
              </DocTab>
            </DocTabs>
            <RibbonTabs>
              <RibbonTab $on>Main</RibbonTab>
              <RibbonTab>Utilities</RibbonTab>
              <CollapseButton aria-label="Collapse ribbon"><Collapse /></CollapseButton>
            </RibbonTabs>
            <MainRibbon />
            <FormArea>
              <FieldGrid>
                <FieldLabel htmlFor="name">Name</FieldLabel>
                <Field id="name" defaultValue="Allow Notes in Purchase Orders To Always Be Editable" />
                <FieldLabel htmlFor="author" $end>Author</FieldLabel>
                <Field id="author" defaultValue="Jiwa Financials" />
                <FieldLabel htmlFor="description">Description</FieldLabel>
                <FormMemo id="description" defaultValue={note} />
              </FieldGrid>
              <OptionGrid>
                <CheckLabel><Check type="checkbox" />Isolate</CheckLabel>
                <CheckLabel><Check type="checkbox" />Enabled</CheckLabel>
                <OptionLabel htmlFor="order">Execution Order</OptionLabel>
                <Field id="order" defaultValue="0" $end />
                <OptionLabel htmlFor="policy">Exception Policy</OptionLabel>
                <PickBox>
                  <PolicySelect id="policy"><option>Report</option></PolicySelect>
                  <PolicyArrow><Down color="#000" /></PolicyArrow>
                </PickBox>
                <OptionLabel htmlFor="version">Version</OptionLabel>
                <Field id="version" defaultValue="7.2.1.0" $end />
              </OptionGrid>
            </FormArea>
            <Divider />
            <PageTabs>
              <PageTab $on>Details</PageTab>
              <PageTab>Code</PageTab>
              <PageTab>Forms</PageTab>
              <PageTab>Business Logic</PageTab>
            </PageTabs>
            <Heading>Allow Notes in Purchase Orders To Always Be Editable</Heading>
            <Panels>
              <Panel>
                <PanelTitle>Description</PanelTitle>
                <PanelMemo aria-label="Plugin description" defaultValue={note} />
              </Panel>
              <SplitPanel>
                <Picker>
                  <PickerTrack>
                    <ScrollSpace />
                    <ScrollButton aria-label="Scroll down"><Down color={slate} /></ScrollButton>
                  </PickerTrack>
                </Picker>
                <InnerFrame />
              </SplitPanel>
            </Panels>
          </Document>
          <QuickSearch>
            <QuickInput aria-label="Search menu" />
            <QuickButton type="button" aria-label="Search"><SearchIcon size={16} /></QuickButton>
          </QuickSearch>
          <StatusBar>
            <StatusText>Main / New South Wales</StatusText>
            <Tray>
              <Recent size={16} />
              <Icon w={16}>
                <circle cx="4" cy="4" r="2.500" fill="#7ed6a5" /><path d="M0 12q0-6 4-6t4 6z" fill="#4bb580" />
                <circle cx="10" cy="4" r="3" fill="#a9dcf5" /><path d="M6 11q0-5 4-5t5 5z" fill="#6fb9dc" />
                <circle cx="12" cy="12" r="4" fill="#e53935" /><path d="M10.500 10.500l3 3m0-3l-3 3" stroke="#fff" strokeWidth="1.500" />
              </Icon>
              <Icon w={16}>
                <circle cx="11" cy="4.500" r="3.200" stroke="#f3c15f" strokeWidth="2.500" />
                <path d="M9 7l-7.500 7M4 12l2 2" stroke="#f3c15f" strokeWidth="2.500" />
                <path d="M9 11h6v4.500H9z" fill="#f0a81c" /><path d="M10.500 11V9.500h3V11" stroke="#f0a81c" />
              </Icon>
              <Clock>3:36 PM<br />16/06/2022</Clock>
            </Tray>
          </StatusBar>
        </Shell>
        <Taskbar>3:36 PM</Taskbar>
      </Desktop>
      <SearchDialog />
    </>
  );
}
